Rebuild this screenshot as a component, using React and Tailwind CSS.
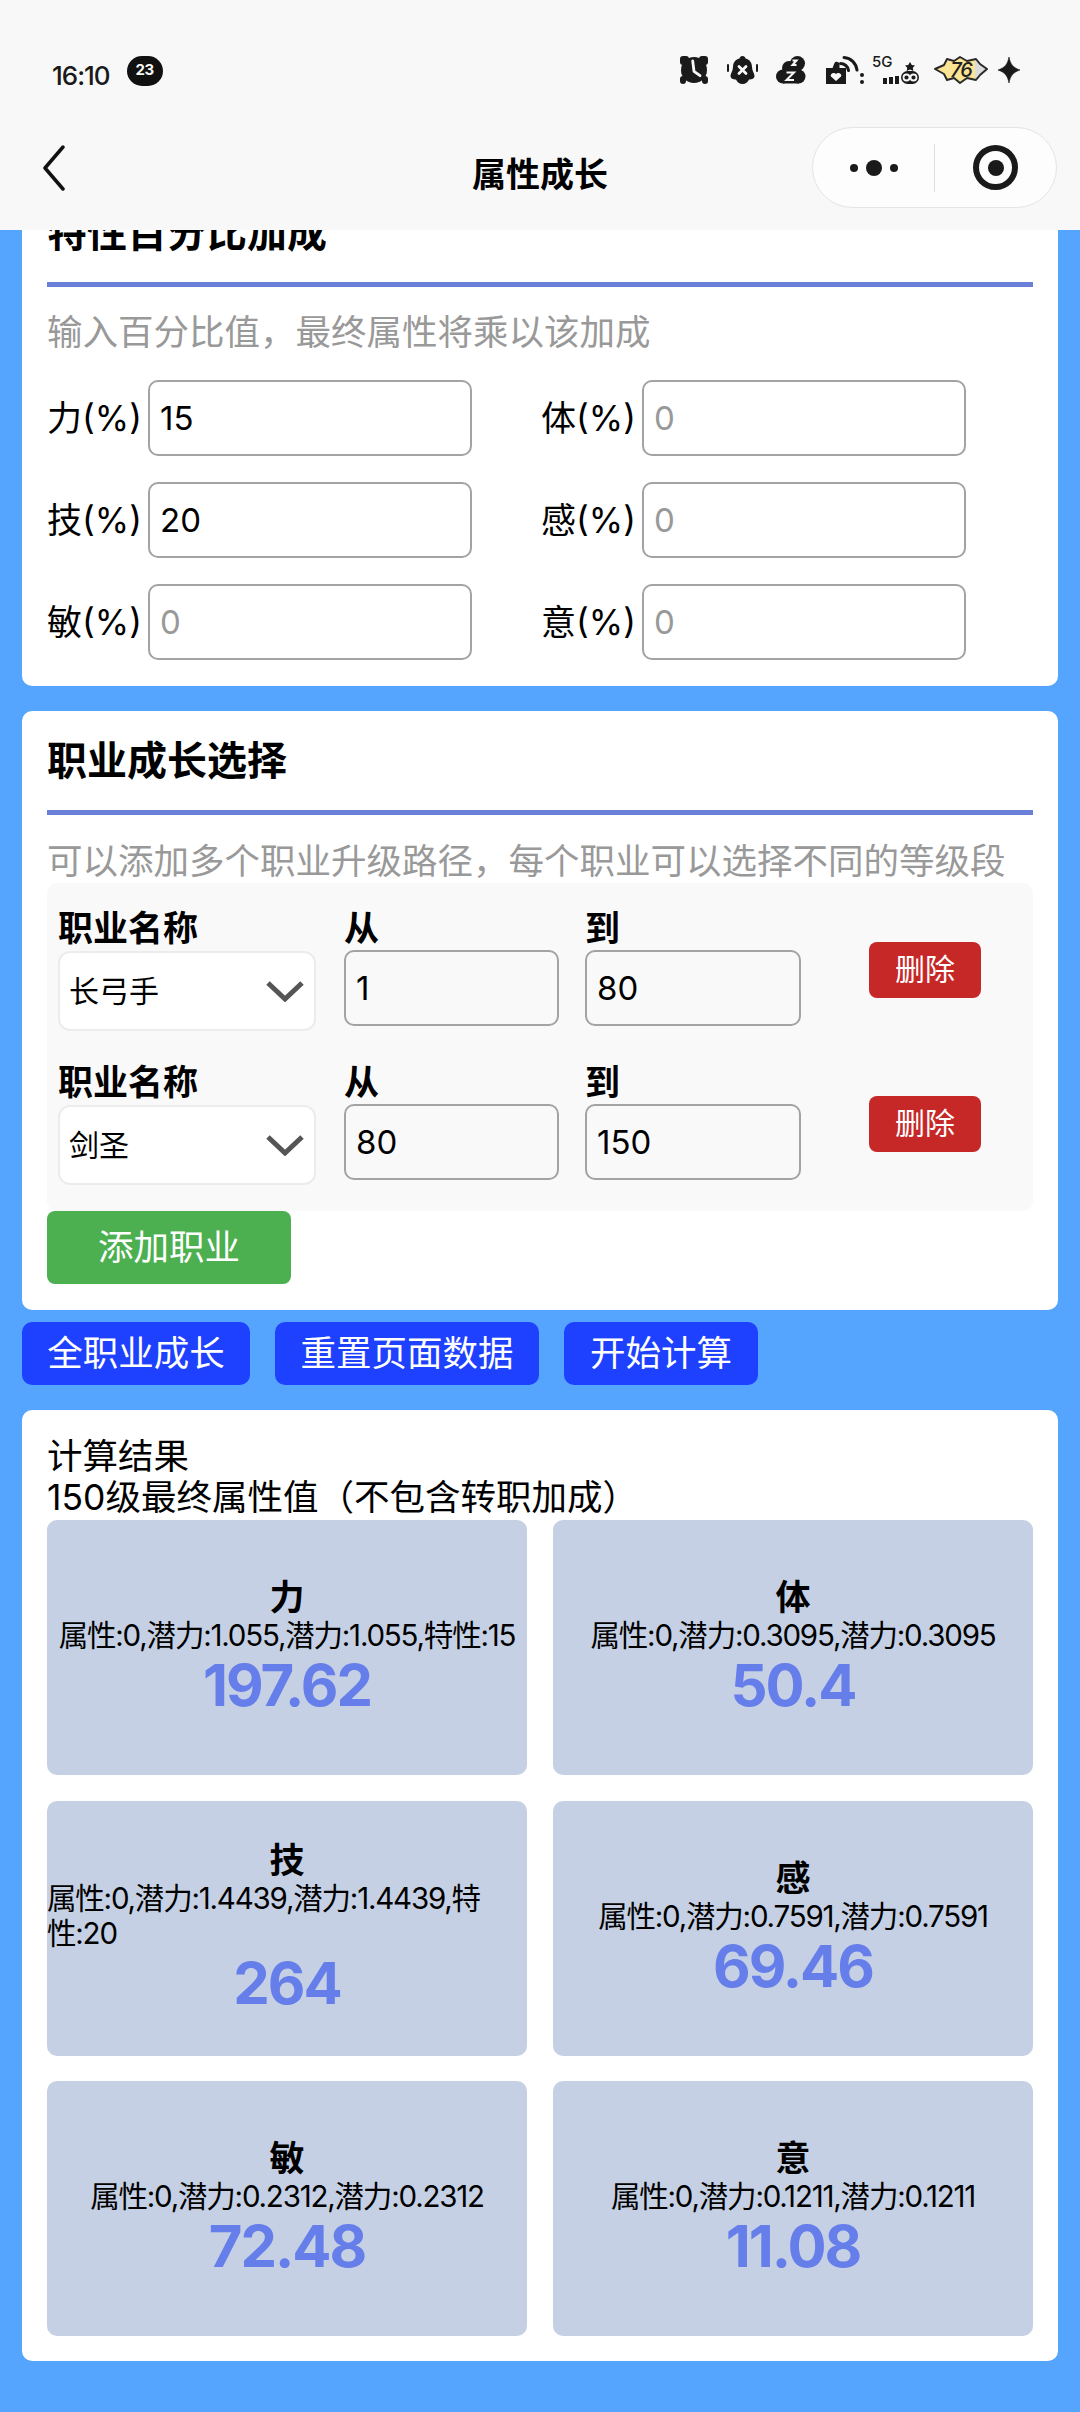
const FONT = "font-['Inter','Noto_Sans_CJK_SC',sans-serif]";

function StatusIcons() {
  return (
    <div className="mb-[11px] flex items-center">
      <svg width="28" height="28" viewBox="0 0 28 28">
        <circle cx="14" cy="14" r="13" fill="#1a1a1a" />
        <rect x="0" y="0" width="9" height="9" rx="3" fill="#1a1a1a" />
        <rect x="19" y="0" width="9" height="9" rx="3" fill="#1a1a1a" />
        <rect x="0" y="20" width="6" height="8" rx="3" fill="#1a1a1a" />
        <rect x="22" y="20" width="6" height="8" rx="3" fill="#1a1a1a" />
        <path d="M12.700 5l1.300 10.300 6 4.400" stroke="#f8f8f8" strokeWidth="2.800" fill="none" strokeLinecap="round" strokeLinejoin="round" />
      </svg>
      <svg width="31" height="28" viewBox="0 0 31 28" className="ml-[19px]">
        <path d="M15.500 0c2 0 3 1.500 3 2.500 4.500 1 6.500 4.500 6.500 8.500 0 4 2.500 6 2.500 9 0 2.500-2.500 3.500-5.500 3.500-1 2.500-3.500 4.500-6.500 4.500s-5.500-2-6.500-4.500c-3 0-5.500-1-5.500-3.500 0-3 2.500-5 2.500-9 0-4 2-7.500 6.500-8.500 0-1 1-2.500 3-2.500z" fill="#1a1a1a" />
        <path d="M12 10.500l7 7M19 10.500l-7 7" stroke="#f8f8f8" strokeWidth="2.800" strokeLinecap="round" />
        <path d="M1 9v6M30 9v6" stroke="#1a1a1a" strokeWidth="2" strokeLinecap="round" />
      </svg>
      <svg width="30" height="28" viewBox="0 0 30 28" className="ml-[18px]">
        <circle cx="21.500" cy="7.500" r="7.500" fill="#1a1a1a" />
        <circle cx="13" cy="12" r="7" fill="#1a1a1a" />
        <circle cx="7" cy="20.500" r="7" fill="#1a1a1a" />
        <circle cx="22.500" cy="20.500" r="7" fill="#1a1a1a" />
        <rect x="7" y="13" width="16" height="14.500" fill="#1a1a1a" />
        <path d="M16.500 4.500h4l-4 4.500h4M10.500 16.500h7.500l-7.500 7.500h7.500" stroke="#f8f8f8" strokeWidth="2" fill="none" />
      </svg>
      <svg width="38" height="28" viewBox="0 0 38 28" className="ml-[20px]">
        <path d="M0 12h6.500l2-5c1-2 5-1.500 5 1.500V12h6.500v16H0z" fill="#1a1a1a" />
        <path d="M10 25l-5-4.500c-1.500-2.500 3-5 5-2.500 2-2.500 6.500 0 5 2.500z" fill="#f8f8f8" />
        <path d="M14.500 7.500c4 0 7.500 3 8 7M18 1.500c7 .5 12 5.500 13 12.500" stroke="#1a1a1a" strokeWidth="3" fill="none" strokeLinecap="round" />
        <circle cx="36" cy="19" r="2" fill="#1a1a1a" />
        <circle cx="36" cy="26" r="2" fill="#1a1a1a" />
      </svg>
      <div className="relative ml-[2px] h-[28px] w-[59px]">
        <span className="absolute left-[6px] top-[-3px] text-[15px] font-medium leading-[18px] text-[#1a1a1a]">5G</span>
        <svg width="59" height="28" viewBox="0 0 59 28" className="absolute left-0 top-0">
          <path d="M19 22v6M25 21v7M31 20v8" stroke="#1a1a1a" strokeWidth="4" />
          <path d="M44 7l1.800 3 3.200.6-2.200 2.200.5 3.200-3.300-1.500-3.300 1.500.5-3.200-2.200-2.200 3.200-.6z" fill="#1a1a1a" transform="translate(0 -1)" />
          <rect x="35" y="15" width="18" height="13" rx="6.500" fill="#1a1a1a" />
          <circle cx="40.500" cy="21.500" r="3" fill="none" stroke="#f8f8f8" strokeWidth="1.800" />
          <circle cx="47.500" cy="21.500" r="3" fill="none" stroke="#f8f8f8" strokeWidth="1.800" />
        </svg>
      </div>
      <div className="relative ml-[9px] flex h-[28px] w-[54px] items-center justify-center">
        <svg width="54" height="28" viewBox="0 0 54 28" className="absolute left-0 top-0">
          <defs>
            <linearGradient id="star-fill" x1="0" x2="1" y1="0" y2="0">
              <stop offset="0.77" stopColor="#fbe493" />
              <stop offset="0.77" stopColor="#dcdcdc" />
            </linearGradient>
          </defs>
          <path d="M1 13L10 9 13 3 20 5 26 1 33 5 42 3 46 8 53 13 46 19 42 24 33 22 26 27 20 22 13 24 10 18z" fill="url(#star-fill)" stroke="#2a2a2a" strokeWidth="2" strokeLinejoin="round" />
        </svg>
        <span className="relative text-[20px] font-medium italic leading-[24px] tracking-[-1px] text-[#222]">76</span>
      </div>
      <svg width="22" height="26" viewBox="0 0 22 26" className="ml-[10px]">
        <path d="M11 0c1.500 7.500 4 10.500 11 13-7 2.500-9.500 5.500-11 13-1.500-7.500-4-10.500-11-13 7-2.500 9.500-5.500 11-13z" fill="#1a1a1a" stroke="#1a1a1a" strokeWidth="0.600" />
      </svg>
    </div>
  );
}

function Bar() {
  return (
    <div className="h-[230px] bg-[#f8f8f8]">
      <div className="flex h-[127px] items-center justify-between pt-[24px] pl-[52px] pr-[60px]">
        <div className="flex items-center">
          <span className="text-[26px] font-medium leading-[30px] tracking-[-1px] text-[#1a1a1a]">16:10</span>
          <span className="ml-[17px] mt-[-10px] flex h-[30px] w-[36px] items-center justify-center rounded-full bg-[#111] text-[15px] font-bold tracking-[-0.500px] text-[#f8f8f8]">23</span>
        </div>
        <StatusIcons />
      </div>
      <div className="grid h-[81px] grid-cols-[1fr_auto_1fr] items-center px-[23px]">
        <svg width="24" height="46" viewBox="0 0 24 46" className="ml-[19px] mt-[1px]">
          <path d="M21 2L3 23l18 21" stroke="#111" strokeWidth="3.500" fill="none" strokeLinecap="round" strokeLinejoin="round" />
        </svg>
        <div className="relative top-[7px] text-[34px] font-bold leading-[44px] text-black">属性成长</div>
        <div className="flex h-[81px] w-[245px] items-center justify-self-end rounded-full border border-[#e4e4e4] bg-[#fdfdfd]">
          <div className="flex w-[121px] items-center justify-center gap-[8px]">
            <i className="block h-[8px] w-[8px] rounded-full bg-[#1a1a1a]" />
            <i className="block h-[16px] w-[16px] rounded-full bg-[#1a1a1a]" />
            <i className="block h-[8px] w-[8px] rounded-full bg-[#1a1a1a]" />
          </div>
          <div className="h-[48px] w-px bg-[#dedede]" />
          <div className="flex flex-1 items-center justify-center">
            <div className="flex h-[45px] w-[45px] items-center justify-center rounded-full border-[6px] border-[#1a1a1a]">
              <div className="h-[16px] w-[16px] rounded-full bg-[#1a1a1a]" />
            </div>
          </div>
        </div>
      </div>
    </div>
  );
}

function SectionTitle({ children }) {
  return (
    <div className="mb-[21px] h-[104px] border-b-[5px] border-[#6a80d8] pt-[25px] text-[40px] font-bold leading-[50px] text-black">
      {children}
    </div>
  );
}

function PercentField({ label, value }) {
  return (
    <div className="flex items-center">
      <span className="w-[101px] text-[35px] leading-[50px] text-black">{label}</span>
      <input
        readOnly
        value={value}
        placeholder="0"
        className="h-[76px] w-[324px] rounded-[10px] border-2 border-[#a3a3a3] bg-white px-[10px] text-[33px] text-black outline-none placeholder:text-[#999]"
      />
    </div>
  );
}

function NumField({ label, value, width }) {
  return (
    <div className={width}>
      <div className="mb-[1px] text-[35px] font-bold leading-[41px] text-black">{label}</div>
      <input
        readOnly
        value={value}
        className="h-[76px] w-full rounded-[10px] border-2 border-[#a3a3a3] bg-transparent px-[10px] text-[33px] text-black outline-none"
      />
    </div>
  );
}

function JobRow({ name, from, to }) {
  return (
    <div className="flex items-center">
      <div className="w-[258px]">
        <div className="mb-[2px] text-[35px] font-bold leading-[41px] text-black">职业名称</div>
        <div className="flex h-[80px] items-center justify-between rounded-[12px] border-2 border-[#ececec] bg-white pl-[9px] pr-[9px]">
          <span className="text-[30px] leading-[40px] text-black">{name}</span>
          <svg width="40" height="22" viewBox="0 0 40 22">
            <path d="M3 3l17 16L37 3" stroke="#555" strokeWidth="5" fill="none" />
          </svg>
        </div>
      </div>
      <div className="ml-[28px] mb-[5px] flex gap-[26px]">
        <NumField label="从" value={from} width="w-[215px]" />
        <NumField label="到" value={to} width="w-[216px]" />
      </div>
      <button className="ml-[68px] h-[56px] w-[112px] rounded-[8px] bg-[#c62828] text-[30px] text-white">删除</button>
    </div>
  );
}

function Tile({ name, detail, value }) {
  return (
    <div className="flex h-[255px] flex-col items-center justify-center rounded-[10px] bg-[#c5d0e4]">
      <div className="text-[35px] font-bold leading-[41px] text-black">{name}</div>
      <div className="text-[29.500px] leading-[35px] tracking-[-1.200px] text-black">{detail}</div>
      <div className="text-[58px] font-bold leading-[65px] tracking-[-2px] text-[#667eea]">{value}</div>
    </div>
  );
}

export default function App() {
  return (
    <div className={`${FONT} h-[2412px] overflow-hidden bg-[#55a5ff]`}>
      <Bar />
      <div className="overflow-hidden">
        <div className="mt-[-47px] px-[22px]">
          <section className="rounded-[10px] bg-white px-[25px] pb-[26px]">
            <SectionTitle>特性百分比加成</SectionTitle>
            <p className="mb-[22px] text-[35.500px] leading-[50px] text-[#999]">输入百分比值，最终属性将乘以该加成</p>
            <div className="grid grid-cols-[494px_1fr] gap-y-[26px]">
              <PercentField label="力(%)" value="15" />
              <PercentField label="体(%)" value="" />
              <PercentField label="技(%)" value="20" />
              <PercentField label="感(%)" value="" />
              <PercentField label="敏(%)" value="" />
              <PercentField label="意(%)" value="" />
            </div>
          </section>

          <section className="mt-[25px] rounded-[10px] bg-white px-[25px] pb-[26px]">
            <SectionTitle>职业成长选择</SectionTitle>
            <p className="pt-[4px] text-[35.500px] leading-[43px] text-[#999]">可以添加多个职业升级路径，每个职业可以选择不同的等级段</p>
            <div className="flex flex-col gap-[31px] rounded-[10px] bg-[#f9f9f9] px-[11px] pt-[25px] pb-[26px]">
              <JobRow name="长弓手" from="1" to="80" />
              <JobRow name="剑圣" from="80" to="150" />
            </div>
            <button className="h-[73px] w-[244px] rounded-[8px] bg-[#4caf50] text-[35.500px] text-white">添加职业</button>
          </section>

          <div className="mt-[12px] flex gap-[25px]">
            <button className="h-[63px] w-[228px] rounded-[10px] bg-[#1e41ff] text-[35.500px] text-white">全职业成长</button>
            <button className="h-[63px] w-[264px] rounded-[10px] bg-[#1e41ff] text-[35.500px] text-white">重置页面数据</button>
            <button className="h-[63px] w-[194px] rounded-[10px] bg-[#1e41ff] text-[35.500px] text-white">开始计算</button>
          </div>

          <section className="mt-[25px] rounded-[10px] bg-white px-[25px] pt-[26px] pb-[25px]">
            <div className="mb-[2px] text-[35.500px] leading-[41px] text-black">
              <div>计算结果</div>
              <div>150级最终属性值（不包含转职加成）</div>
            </div>
            <div className="grid grid-cols-2 gap-x-[26px] gap-y-[25.500px]">
              <Tile name="力" detail="属性:0,潜力:1.055,潜力:1.055,特性:15" value="197.62" />
              <Tile name="体" detail="属性:0,潜力:0.3095,潜力:0.3095" value="50.4" />
              <Tile name="技" detail="属性:0,潜力:1.4439,潜力:1.4439,特性:20" value="264" />
              <Tile name="感" detail="属性:0,潜力:0.7591,潜力:0.7591" value="69.46" />
              <Tile name="敏" detail="属性:0,潜力:0.2312,潜力:0.2312" value="72.48" />
              <Tile name="意" detail="属性:0,潜力:0.1211,潜力:0.1211" value="11.08" />
            </div>
          </section>
        </div>
      </div>
    </div>
  );
}
